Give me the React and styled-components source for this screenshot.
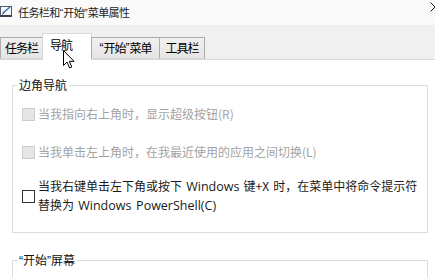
import styled, { createGlobalStyle } from "styled-components";

const GlobalStyle = createGlobalStyle`
  html, body {
    margin: 0;
    padding: 0;
    background: #ffffff;
  }
  body {
    font-family: "Noto Sans CJK SC", "Noto Sans", sans-serif;
    font-size: 12px;
    color: #000000;
  }
`;

export default function App() {
  return (
    <>
      <GlobalStyle />
      <Window>
        <TitleBar>
          <TitleIcon viewBox="0 0 13 14">
            <rect x="0.5" y="1.5" width="11" height="10" fill="#f4f6f8" stroke="#4a5a6c" />
            <rect x="0.5" y="10" width="11" height="2" fill="#34404e" />
            <path d="M3 8 L10 2" stroke="#2f6fb3" strokeWidth="1.4" />
            <path d="M2.5 9.5 L4 7.5" stroke="#222" strokeWidth="1" />
          </TitleIcon>
          <Title>
            任务栏和<Quote>“</Quote>开始<Quote>”</Quote>菜单属性
          </Title>
          <CloseIcon viewBox="0 0 10 10">
            <path d="M0.5 0.5 L9.5 9.5 M9.5 0.5 L0.5 9.5" stroke="#222" strokeWidth="1" />
          </CloseIcon>
        </TitleBar>

        <TabStrip>
          <Tab width={43}>任务栏</Tab>
          <Tab width={50} active>
            导航
          </Tab>
          <Tab width={69}>
            <Quote>“</Quote>开始<Quote>”</Quote>菜单
          </Tab>
          <Tab width={46}>工具栏</Tab>
        </TabStrip>

        <Pointer viewBox="0 0 12 19">
          <path
            d="M0.5 0.5 L0.5 15.5 L4 12 L6.6 18 L8.8 17 L6.3 11.3 L11 11.3 Z"
            fill="#ffffff"
            stroke="#000000"
            strokeWidth="1"
            strokeLinejoin="round"
          />
        </Pointer>

        <Panel>
          <Group>
            <Legend>边角导航</Legend>
            <Option top={12} disabled>
              <Box disabled />
              <Label>当我指向右上角时，显示超级按钮(R)</Label>
            </Option>
            <Option top={20} disabled>
              <Box disabled />
              <Label>当我单击左上角时，在我最近使用的应用之间切换(L)</Label>
            </Option>
            <Option top={16}>
              <Box />
              <Label>
                当我右键单击左下角或按下 <Latin>Windows</Latin> 键+X 时，在菜单中将命令提示符
                <br />
                替换为 <Latin>Windows PowerShell(C)</Latin>
              </Label>
            </Option>
          </Group>
          <Group spaced>
            <Legend>
              <Quote>“</Quote>开始<Quote>”</Quote>屏幕
            </Legend>
            <Filler />
          </Group>
        </Panel>
      </Window>
    </>
  );
}

const Window = styled.div`
  position: relative;
  width: 435px;
  height: 277px;
  overflow: hidden;
  display: flex;
  flex-direction: column;
  background: #ffffff;
`;

const TitleBar = styled.div`
  flex-shrink: 0;
  height: 25px;
  display: flex;
  align-items: center;
  background: #fafafa;
`;

const TitleIcon = styled.svg`
  width: 13px;
  height: 14px;
  margin-top: -1px;
  flex-shrink: 0;
`;

const Title = styled.div`
  margin-left: 5px;
  font-size: 11px;
  letter-spacing: -0.6px;
  line-height: 16px;
  color: #1a1a1a;
  white-space: nowrap;
`;

const Quote = styled.span`
  font-family: "Liberation Sans", "Noto Sans", sans-serif;
  letter-spacing: 0;
`;

const Latin = styled.span`
  font-family: "Open Sans", "Noto Sans", sans-serif;
  font-size: 12.5px;
`;

const CloseIcon = styled.svg`
  width: 10px;
  height: 10px;
  margin-left: auto;
  margin-right: -5px;
  align-self: flex-start;
  margin-top: 2px;
  flex-shrink: 0;
`;

const TabStrip = styled.div`
  flex-shrink: 0;
  height: 34px;
  display: flex;
  align-items: flex-end;
  background: #f0f0f0;
  border-bottom: 1px solid #d9d9d9;
`;

const Tab = styled.div`
  box-sizing: border-box;
  width: ${(p) => p.width}px;
  height: ${(p) => (p.active ? 27 : 22)}px;
  margin-bottom: ${(p) => (p.active ? -1 : 0)}px;
  display: flex;
  align-items: center;
  justify-content: ${(p) => (p.active ? "flex-start" : "center")};
  padding-left: ${(p) => (p.active ? 7 : 0)}px;
  padding-bottom: ${(p) => (p.active ? 5 : 0)}px;
  border: 1px solid ${(p) => (p.active ? "#d9d9d9" : "#acacac")};
  border-bottom: ${(p) => (p.active ? "none" : "1px solid #d9d9d9")};
  background: ${(p) =>
    p.active ? "#ffffff" : "linear-gradient(#f0f0f0, #e5e5e5)"};
  font-size: 12px;
  letter-spacing: -1px;
  line-height: 16px;
  color: #000000;
  white-space: nowrap;
  & + & {
    margin-left: -1px;
  }
`;

const Pointer = styled.svg`
  position: absolute;
  left: 63px;
  top: 50px;
  width: 12px;
  height: 19px;
`;

const Panel = styled.div`
  flex: 1;
  display: flex;
  flex-direction: column;
  padding-top: 17px;
  background: #ffffff;
`;

const Group = styled.fieldset`
  flex-shrink: 0;
  margin: ${(p) => (p.spaced ? 19 : 0)}px 7px 0 12px;
  padding: 0 0 17px 9px;
  border: 1px solid #dcdcdc;
  min-width: 0;
`;

const Legend = styled.legend`
  margin-left: -5px;
  padding: 0 2px;
  font-size: 12px;
  line-height: 16px;
  color: #111111;
`;

const Option = styled.div`
  display: flex;
  align-items: center;
  margin-top: ${(p) => p.top}px;
  color: ${(p) => (p.disabled ? "#a3a3a3" : "#1a1a1a")};
`;

const Box = styled.span`
  box-sizing: border-box;
  width: 13px;
  height: 13px;
  flex-shrink: 0;
  border: 1px solid ${(p) => (p.disabled ? "#cccccc" : "#333333")};
  background: ${(p) => (p.disabled ? "#e6e6e6" : "#ffffff")};
`;

const Label = styled.div`
  margin-left: 3px;
  font-size: 12px;
  line-height: 18px;
  word-spacing: 1.5px;
  white-space: nowrap;
`;

const Filler = styled.div`
  height: 40px;
`;
